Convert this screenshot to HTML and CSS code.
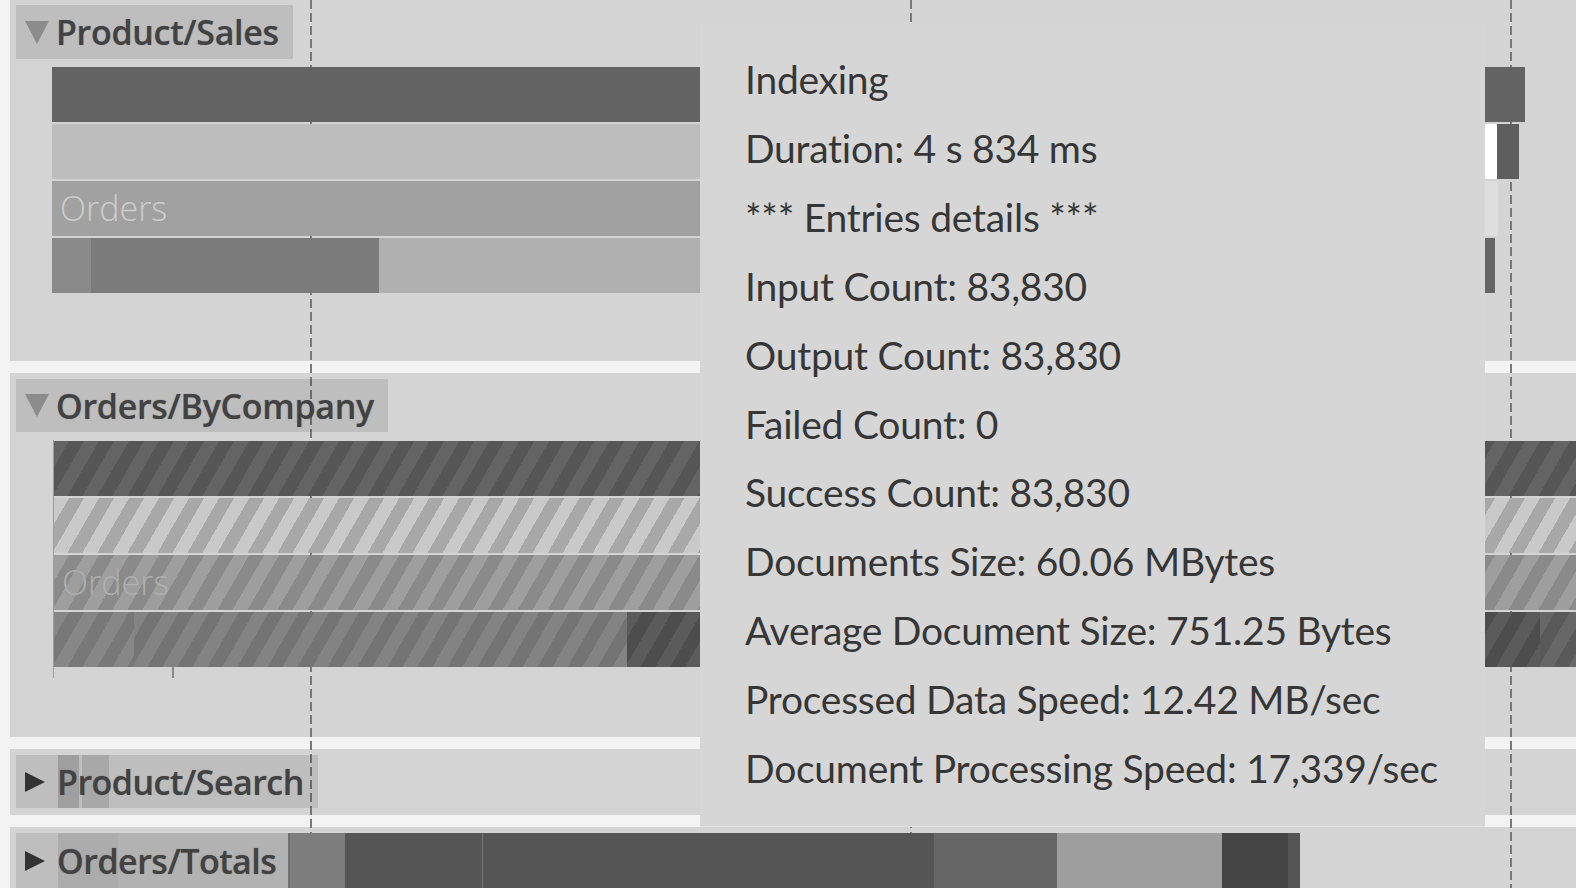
FILE: index.html
```html
<!DOCTYPE html>
<html lang="en">
<head>
<meta charset="utf-8">
<title>Indexing performance</title>
<link rel="stylesheet" href="styles.css">
</head>
<body>
<div class="chart">
  <div class="gridlines">
    <div class="gl" style="left:300px"></div>
    <div class="gl" style="left:900px"></div>
    <div class="gl" style="left:1500px"></div>
  </div>

  <section class="lane lane-1">
    <div class="label"><span class="tri-down"></span><span class="name">Product/Sales</span></div>
    <div class="track">
      <div class="rows">
        <div class="row"><div class="seg c63" style="width:1473px"></div></div>
        <div class="row"><div class="seg cbd" style="width:1433px"></div><div class="seg cff" style="width:12px"></div><div class="seg c5e" style="width:22px"></div></div>
        <div class="row"><div class="seg ca1" style="width:1433px"><span class="seg-text">Orders</span></div><div class="seg cde" style="width:13px"></div></div>
        <div class="row"><div class="seg c8a" style="width:39px"></div><div class="seg c7b" style="width:288px"></div><div class="seg cb0" style="width:1106px"></div><div class="seg c66" style="width:10px"></div></div>
      </div>
    </div>
  </section>

  <section class="lane lane-2">
    <div class="label"><span class="tri-down"></span><span class="name">Orders/ByCompany</span></div>
    <div class="track">
      <div class="rows">
        <div class="row"><div class="seg st-dark" style="width:1522px"></div></div>
        <div class="row"><div class="seg st-light" style="width:1522px"></div></div>
        <div class="row"><div class="seg st-mid" style="width:1522px"><span class="seg-text faint">Orders</span></div></div>
        <div class="row"><div class="seg st-a" style="width:80px"></div><div class="seg st-b" style="width:493px"></div><div class="seg st-c" style="width:913px"></div><div class="seg st-d" style="width:40px"></div></div>
        <div class="ticks"><span class="tick"></span></div>
      </div>
    </div>
  </section>

  <section class="lane lane-3">
    <div class="label"><span class="tri-right"></span><span class="name">Product/Search</span></div>
    <div class="track">
      <div class="rows">
        <div class="row"><div class="seg" style="width:6px"></div><div class="seg cb1" style="width:21px"></div><div class="seg" style="width:3px"></div><div class="seg cbc" style="width:27px"></div></div>
      </div>
    </div>
  </section>

  <section class="lane lane-4">
    <div class="label"><span class="tri-right"></span><span class="name">Orders/Totals</span></div>
    <div class="track">
      <div class="rows">
        <div class="row"><div class="seg" style="width:6px"></div><div class="seg cc0" style="width:60px"></div><div class="seg cc7" style="width:170px"></div><div class="seg c7d" style="width:57px"></div><div class="seg c55" style="width:137px"></div><div class="seg c77" style="width:1px"></div><div class="seg c55" style="width:451px"></div><div class="seg c66" style="width:123px"></div><div class="seg c9e" style="width:165px"></div><div class="seg c45" style="width:66px"></div><div class="seg c55" style="width:12px"></div></div>
      </div>
    </div>
  </section>

  <div class="tooltip">
    <div class="tip-line">Indexing</div>
    <div class="tip-line">Duration: 4 s 834 ms</div>
    <div class="tip-line">*** Entries details ***</div>
    <div class="tip-line">Input Count: 83,830</div>
    <div class="tip-line">Output Count: 83,830</div>
    <div class="tip-line">Failed Count: 0</div>
    <div class="tip-line">Success Count: 83,830</div>
    <div class="tip-line">Documents Size: 60.06 MBytes</div>
    <div class="tip-line">Average Document Size: 751.25 Bytes</div>
    <div class="tip-line">Processed Data Speed: 12.42 MB/sec</div>
    <div class="tip-line">Document Processing Speed: 17,339/sec</div>
  </div>
</div>
</body>
</html>
```

FILE: styles.css
```css
html, body {
  margin: 0;
  padding: 0;
  height: 100%;
  overflow: hidden;
}
body {
  background: #f3f3f3;
  font-family: "Open Sans", "DejaVu Sans", sans-serif;
}
.chart {
  position: relative;
  z-index: 0;
  margin-left: 10px;
  display: flex;
  flex-direction: column;
  gap: 12px;
}
.gridlines {
  position: absolute;
  inset: 0;
  z-index: 0;
  pointer-events: none;
}
.gl {
  position: absolute;
  top: 0;
  bottom: 0;
  width: 2px;
  background: repeating-linear-gradient(to bottom, #787878 0 9px, transparent 9px 13px);
}
.lane {
  display: grid;
  grid-template-columns: minmax(0, 1fr);
  background: #d4d4d4;
}
.lane > .label,
.lane > .track {
  grid-area: 1 / 1;
}
.label {
  z-index: 2;
  align-self: start;
  justify-self: start;
  margin: 6px 0 0 6px;
  height: 54px;
  padding: 0 14px 0 9px;
  display: flex;
  align-items: center;
  background: rgba(0, 0, 0, 0.1);
}
.name {
  font-size: 34px;
  font-weight: 600;
  color: #424242;
  letter-spacing: -0.3px;
  white-space: nowrap;
  text-shadow: 0 0 1px rgba(0, 0, 0, 0.35);
}
.lane-3 .name { letter-spacing: -0.5px; }
.lane-4 .name { letter-spacing: -0.5px; }
.tri-down {
  width: 0;
  height: 0;
  border-left: 12.5px solid transparent;
  border-right: 12.5px solid transparent;
  border-top: 23px solid #8c8c8c;
  margin-right: 7px;
}
.tri-right {
  width: 0;
  height: 0;
  border-top: 10px solid transparent;
  border-bottom: 10px solid transparent;
  border-left: 20px solid #333;
  margin-right: 12px;
}
.track {
  z-index: 1;
  min-width: 0;
  padding-left: 42px;
}
.rows {
  display: flex;
  flex-direction: column;
  gap: 2px;
}
.row {
  display: flex;
  height: 55px;
}
.seg {
  flex: none;
  height: 100%;
  overflow: hidden;
}
.seg-text {
  display: block;
  padding-left: 8px;
  font-size: 34px;
  font-weight: 300;
  line-height: 55px;
  color: #cdcdcd;
  white-space: nowrap;
}
.seg-text.faint {
  color: #afafaf;
}

/* lane geometry */
.lane-1 { margin-top: -1px; height: 362px; }
.lane-1 .track { padding-top: 68px; }
.lane-2 { height: 364px; }
.lane-2 .label { height: 53px; }
.lane-2 .track { padding-top: 67px; padding-left: 43px; }
.lane-2 .rows { border-left: 1px solid #9c9c9c; padding-top: 1px; }
.ticks { height: 11px; margin-top: -2px; }
.tick { display: block; margin-left: 118px; width: 2px; height: 100%; background: #8a8a8a; }
.lane-3 { height: 66px; }
.lane-3 .label { height: 53px; }
.lane-3 .track { padding-top: 6px; }
.lane-3 .row { height: 53px; }
.lane-4 { height: 61px; }
.lane-4 .label { height: 55px; }
.lane-4 .track { padding-top: 6px; }

/* solid colours */
.c63 { background: #636363; }
.cbd { background: #bdbdbd; }
.cff { background: #ffffff; }
.c5e { background: #5e5e5e; }
.ca1 { background: #a1a1a1; }
.cde { background: #dedede; }
.c8a { background: #8a8a8a; }
.c7b { background: #7b7b7b; }
.cb0 { background: #b0b0b0; }
.c66 { background: #666666; }
.cb1 { background: #b1b1b1; }
.cbc { background: #bcbcbc; }
.cc0 { background: #c0c0c0; }
.cc7 { background: #c7c7c7; }
.c7d { background: #7d7d7d; }
.c55 { background: #555555; }
.c77 { background: #777777; }
.c9e { background: #9e9e9e; }
.c45 { background: #454545; }

/* striped (in-progress) colours */
.st-dark  { background: repeating-linear-gradient(120deg, #646464 0 13px, #565656 13px 26px); }
.st-light { background: repeating-linear-gradient(120deg, #c9c9c9 0 13px, #a8a8a8 13px 26px); }
.st-mid   { background: repeating-linear-gradient(120deg, #9e9e9e 0 13px, #8a8a8a 13px 26px); }
.st-a     { background: repeating-linear-gradient(120deg, #878787 0 13px, #787878 13px 26px); }
.st-b     { background: repeating-linear-gradient(120deg, #838383 0 13px, #747474 13px 26px); }
.st-c     { background: repeating-linear-gradient(120deg, #5b5b5b 0 13px, #4d4d4d 13px 26px); }
.st-d     { background: repeating-linear-gradient(120deg, #676767 0 13px, #595959 13px 26px); }

/* tooltip */
.tooltip {
  position: absolute;
  z-index: 5;
  left: 690px;
  top: 24px;
  width: 785px;
  height: 803px;
  box-sizing: border-box;
  padding: 21px 0 0 45px;
  background: #d6d6d6;
  border-bottom: 1px solid #e2e2e2;
  font-family: Lato, "Open Sans", sans-serif;
  font-size: 39px;
  letter-spacing: -0.25px;
  line-height: 68.9px;
  color: #363636;
}
.tip-line {
  white-space: nowrap;
}
```
